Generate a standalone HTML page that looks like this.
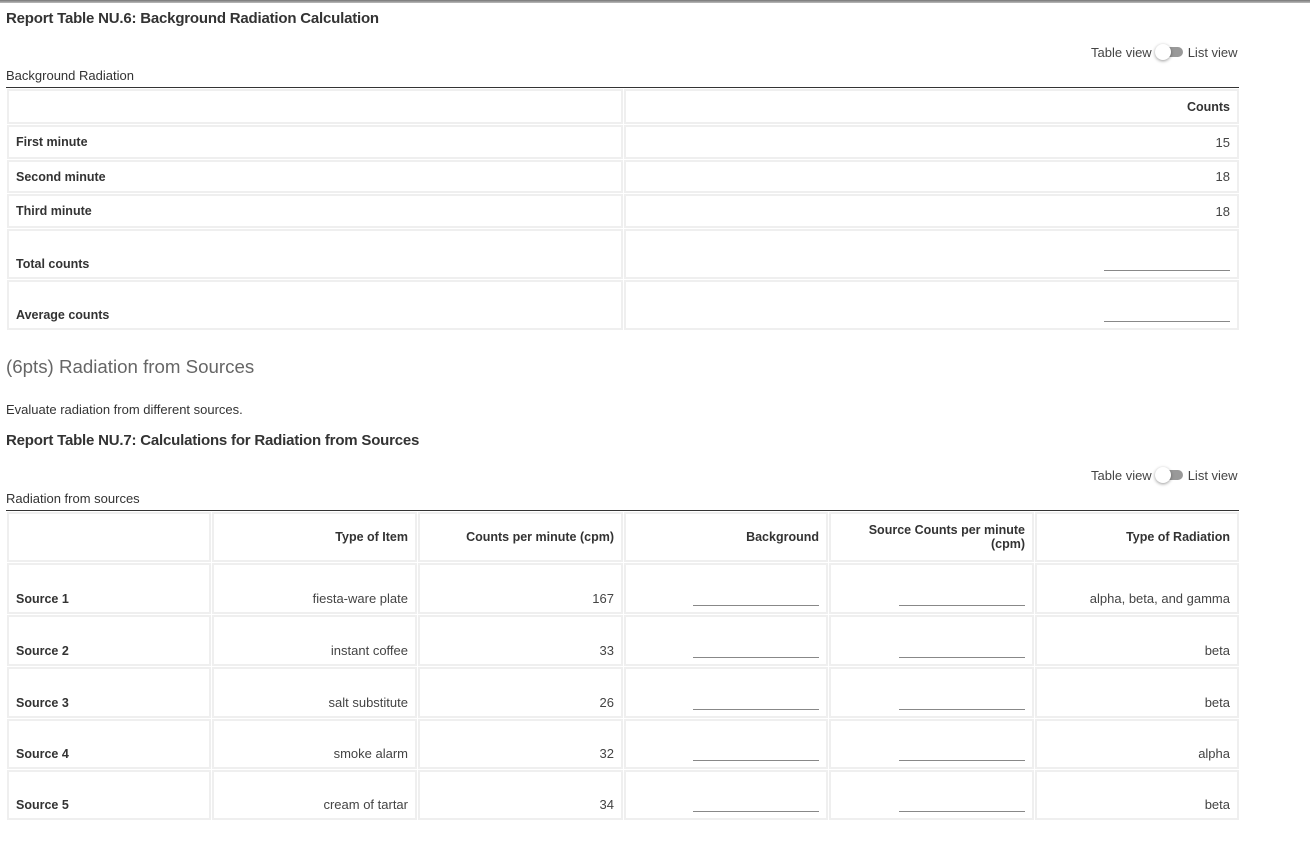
<!DOCTYPE html>
<html><head><meta charset="utf-8"><style>
body{margin:0;width:1310px;height:861px;background:#fff;font-family:"Liberation Sans",Arial,sans-serif;color:#333;position:relative;overflow:hidden}
.topbar{position:absolute;left:0;top:0;width:1310px;height:3px;background:linear-gradient(#777,#bbb)}
.abs{position:absolute;white-space:nowrap}
h1{position:absolute;margin:0;font-size:15px;letter-spacing:-0.2px;font-weight:bold;color:#333;left:6px}
.cap{position:absolute;left:6px;font-size:13px;color:#333}
.line{position:absolute;left:6px;width:1233px;height:1px;background:#333}
.toggle{position:absolute;font-size:13px;color:#444;display:flex;align-items:center}
.sw{position:relative;width:30px;height:16px;margin:0 3px}
.sw .tr{position:absolute;left:6px;top:3px;width:22px;height:10px;border-radius:5px;background:#999}
.sw .kn{position:absolute;left:0;top:0;width:16px;height:16px;border-radius:50%;background:#fff;box-shadow:0 1px 3px rgba(0,0,0,.4)}
.grid{position:absolute;left:7px;display:grid;gap:1px}
.c{box-sizing:border-box;border:2px solid #efefef;font-size:13px;padding:0 7px;display:flex;align-items:center;justify-content:flex-end;text-align:right;color:#444}
.c.l{justify-content:flex-start;font-weight:bold;color:#333;font-size:12.5px}
.c.h{font-weight:bold;color:#333;font-size:12.5px}
.c.b{align-items:flex-end;padding-bottom:6px}
.u{width:126px;border-bottom:1px solid #888;height:1px;margin-bottom:0}
</style></head><body>
<div class="topbar"></div>
<h1 style="top:10px">Report Table NU.6: Background Radiation Calculation</h1>
<div class="toggle" style="left:1091px;top:44px">Table view<div class="sw"><div class="tr"></div><div class="kn"></div></div>List view</div>
<div class="cap" style="top:68px">Background Radiation</div>
<div class="line" style="top:87px"></div>
<div class="grid" style="top:89px;grid-template-columns:616px 615px;grid-template-rows:35px 34px 33px 34px 50px 50px">
<div class="c"></div><div class="c h">Counts</div>
<div class="c l">First minute</div><div class="c">15</div>
<div class="c l">Second minute</div><div class="c">18</div>
<div class="c l">Third minute</div><div class="c">18</div>
<div class="c l b">Total counts</div><div class="c b"><div class="u"></div></div>
<div class="c l b">Average counts</div><div class="c b"><div class="u"></div></div>
</div>
<div class="abs" style="left:6px;top:356px;font-size:18.7px;color:#666">(6pts) Radiation from Sources</div>
<div class="cap" style="top:402px">Evaluate radiation from different sources.</div>
<h1 style="top:432px">Report Table NU.7: Calculations for Radiation from Sources</h1>
<div class="toggle" style="left:1091px;top:467px">Table view<div class="sw"><div class="tr"></div><div class="kn"></div></div>List view</div>
<div class="cap" style="top:491px">Radiation from sources</div>
<div class="line" style="top:510px"></div>
<div class="grid" style="top:512px;grid-template-columns:204px 205px 205px 204px 205px 204px;grid-template-rows:50px 51px 51px 51px 50px 50px">
<div class="c"></div><div class="c h">Type of Item</div><div class="c h">Counts per minute (cpm)</div><div class="c h">Background</div><div class="c h" style="padding-left:30px">Source Counts per minute (cpm)</div><div class="c h">Type of Radiation</div>
<div class="c l b">Source 1</div><div class="c b">fiesta-ware plate</div><div class="c b">167</div><div class="c b"><div class="u"></div></div><div class="c b"><div class="u"></div></div><div class="c b">alpha, beta, and gamma</div>
<div class="c l b">Source 2</div><div class="c b">instant coffee</div><div class="c b">33</div><div class="c b"><div class="u"></div></div><div class="c b"><div class="u"></div></div><div class="c b">beta</div>
<div class="c l b">Source 3</div><div class="c b">salt substitute</div><div class="c b">26</div><div class="c b"><div class="u"></div></div><div class="c b"><div class="u"></div></div><div class="c b">beta</div>
<div class="c l b">Source 4</div><div class="c b">smoke alarm</div><div class="c b">32</div><div class="c b"><div class="u"></div></div><div class="c b"><div class="u"></div></div><div class="c b">alpha</div>
<div class="c l b">Source 5</div><div class="c b">cream of tartar</div><div class="c b">34</div><div class="c b"><div class="u"></div></div><div class="c b"><div class="u"></div></div><div class="c b">beta</div>
</div>
</body></html>
